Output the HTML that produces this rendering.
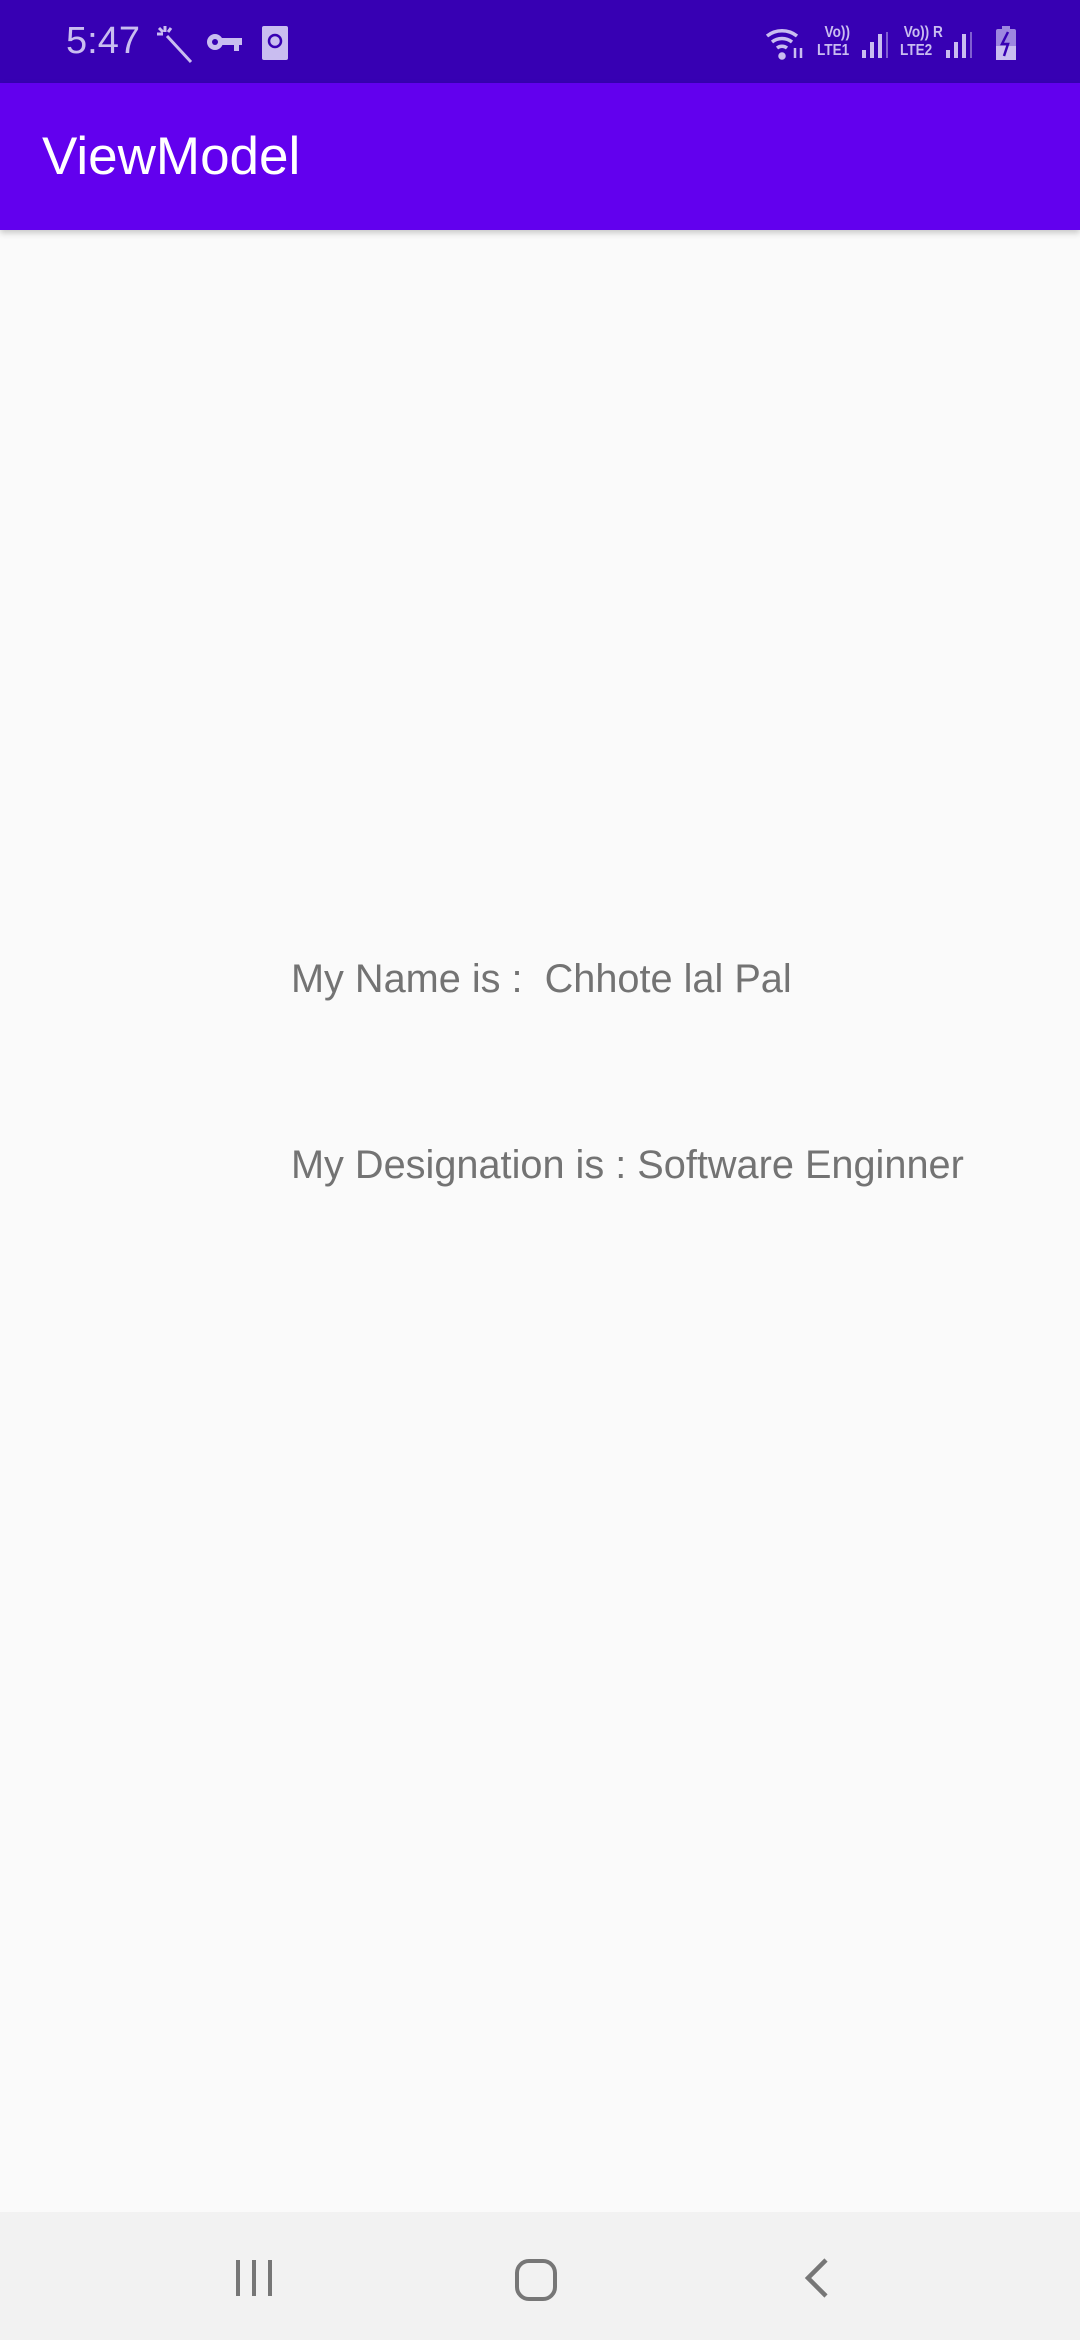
<!DOCTYPE html>
<html><head><meta charset="utf-8"><style>
body{margin:0;width:1080px;height:2340px;background:#fafafa;position:relative;overflow:hidden;font-family:"Liberation Sans",sans-serif}
.sb{position:absolute;left:0;top:0;width:1080px;height:83px;background:#3700b3;color:#c9bdf0}
.ab{position:absolute;left:0;top:83px;width:1080px;height:147px;background:#6200ee;box-shadow:0 3px 6px rgba(0,0,0,.2)}
.t{position:absolute;left:42px;top:130px;font-size:53px;color:#fff;line-height:1}
.tx{position:absolute;left:291px;font-size:39.7px;color:#737373;line-height:1;white-space:pre}
.nav{position:absolute;left:0;top:2212px;width:1080px;height:128px;background:#f2f2f2}
.lte{position:absolute;top:24px;font-size:16px;line-height:18px;font-weight:bold;transform:scaleX(.85);transform-origin:left}
</style></head><body>
<div class="sb">
<div style="position:absolute;left:66px;top:22px;font-size:38px;line-height:1">5:47</div>
<svg style="position:absolute;left:155px;top:24px" width="40" height="40" viewBox="0 0 40 40" stroke="#c9bdf0" stroke-width="3" fill="none"><path d="M12 12L36 38M10 2v6M2 10h6M4 4l4 4M16 4l-3 4"/></svg>
<svg style="position:absolute;left:206px;top:30px" width="36" height="24" viewBox="0 0 36 24" fill="#c9bdf0"><circle cx="9" cy="12" r="8"/><rect x="12" y="8" width="24" height="7"/><rect x="28" y="12" width="5" height="9"/><circle cx="9" cy="12" r="3" fill="#3700b3"/></svg>
<svg style="position:absolute;left:262px;top:26px" width="26" height="34" viewBox="0 0 26 34"><rect width="26" height="34" rx="2" fill="#c9bdf0"/><circle cx="13" cy="15" r="6" fill="none" stroke="#3700b3" stroke-width="2.5"/></svg>
<svg style="position:absolute;left:765px;top:26px" width="44" height="36" viewBox="0 0 44 36" fill="none" stroke="#c9bdf0" stroke-width="3.5"><path d="M2 10a24 24 0 0 1 30 0M7 16a16 16 0 0 1 20 0M12 22a8 8 0 0 1 10 0"/><circle cx="17" cy="30" r="2" fill="#c9bdf0"/><path d="M30 22v10M36 22v10" stroke-width="2.5"/></svg>
<div class="lte" style="left:817px">&nbsp;&nbsp;Vo))<br>LTE1</div>
<svg style="position:absolute;left:860px;top:32px" width="30" height="28" viewBox="0 0 30 28" fill="#c9bdf0"><rect x="2" y="18" width="4" height="8"/><rect x="10" y="10" width="4" height="16"/><rect x="18" y="2" width="4" height="24"/><rect x="26" y="0" width="2" height="26" opacity=".5"/></svg>
<div class="lte" style="left:900px">&nbsp;Vo)) R<br>LTE2</div>
<svg style="position:absolute;left:944px;top:32px" width="30" height="28" viewBox="0 0 30 28" fill="#c9bdf0"><rect x="2" y="18" width="4" height="8"/><rect x="10" y="10" width="4" height="16"/><rect x="18" y="2" width="4" height="24"/><rect x="26" y="0" width="2" height="26" opacity=".5"/></svg>
<svg style="position:absolute;left:996px;top:26px" width="20" height="34" viewBox="0 0 20 34"><rect x="6" y="0" width="8" height="3" fill="#9d86e0"/><rect x="0" y="3" width="20" height="31" rx="2" fill="#9d86e0"/><rect x="0" y="20" width="20" height="14" fill="#c9bdf0"/><path d="M12 6L6 18h6l-4 12" stroke="#3700b3" stroke-width="2.5" fill="none"/></svg>
</div>
<div class="ab"></div>
<div class="t">ViewModel</div>
<div class="tx" style="top:960px">My Name is :  Chhote lal Pal</div>
<div class="tx" style="top:1146px">My Designation is : Software Enginner</div>
<div class="nav">
<svg style="position:absolute;left:234px;top:46px" width="40" height="40" viewBox="0 0 40 40" stroke="#777" stroke-width="4"><path d="M4 2v36M20 2v36M36 2v36"/></svg>
<svg style="position:absolute;left:514px;top:46px" width="44" height="44" viewBox="0 0 44 44"><rect x="3" y="3" width="38" height="38" rx="12" fill="none" stroke="#777" stroke-width="4"/></svg>
<svg style="position:absolute;left:802px;top:44px" width="30" height="44" viewBox="0 0 30 44"><path d="M24 4L6 22l18 18" fill="none" stroke="#777" stroke-width="4.5"/></svg>
</div>
</body></html>
